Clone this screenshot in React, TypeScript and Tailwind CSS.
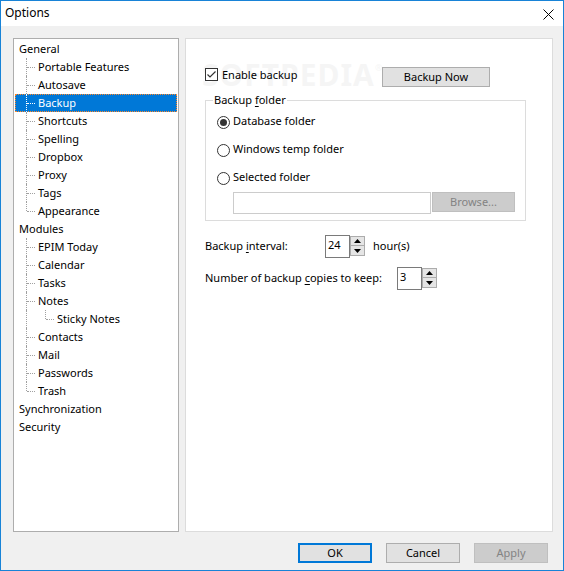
import React from 'react';

type Item = { label: string; level: number; last?: boolean; pipe?: boolean; selected?: boolean };

const TREE: Item[] = [
  { label: 'General', level: 0 },
  { label: 'Portable Features', level: 1 },
  { label: 'Autosave', level: 1 },
  { label: 'Backup', level: 1, selected: true },
  { label: 'Shortcuts', level: 1 },
  { label: 'Spelling', level: 1 },
  { label: 'Dropbox', level: 1 },
  { label: 'Proxy', level: 1 },
  { label: 'Tags', level: 1 },
  { label: 'Appearance', level: 1, last: true },
  { label: 'Modules', level: 0 },
  { label: 'EPIM Today', level: 1 },
  { label: 'Calendar', level: 1 },
  { label: 'Tasks', level: 1 },
  { label: 'Notes', level: 1 },
  { label: 'Sticky Notes', level: 2, last: true, pipe: true },
  { label: 'Contacts', level: 1 },
  { label: 'Mail', level: 1 },
  { label: 'Passwords', level: 1 },
  { label: 'Trash', level: 1, last: true },
  { label: 'Synchronization', level: 0 },
  { label: 'Security', level: 0 },
];

const FONT = { fontFamily: '"Noto Sans", "DejaVu Sans", sans-serif' };

function TreeRow({ item }: { item: Item }) {
  const pad = item.level === 0 ? 'pl-[4px]' : item.level === 1 ? 'pl-[23px]' : 'pl-[42px]';
  const lineColor = item.selected ? 'border-white' : 'border-[#a0a0a0]';
  const lineLeft = item.level === 2 ? 'left-[30px]' : 'left-[11px]';
  const hLeft = item.level === 2 ? 'left-[31px]' : 'left-[12px]';
  return (
    <div
      className={`relative h-[18px] flex items-center pb-[2px] whitespace-nowrap ${pad} ${
        item.selected ? 'bg-[#0078d7] text-white outline outline-1 outline-dotted outline-[#ff8728] -outline-offset-1' : 'text-black'
      }`}
    >
      {item.pipe && (
        <span className="absolute left-[11px] top-0 bottom-0 border-l border-dotted border-[#a0a0a0]" />
      )}
      {item.level > 0 && (
        <>
          <span
            className={`absolute ${lineLeft} top-0 ${item.last ? 'h-[9px]' : 'bottom-0'} border-l border-dotted ${lineColor}`}
          />
          <span className={`absolute ${hLeft} top-[9px] w-[8px] border-t border-dotted ${lineColor}`} />
        </>
      )}
      <span className="leading-none">{item.label}</span>
    </div>
  );
}

function Spinner() {
  return (
    <div className="flex flex-col w-[15px] mt-[1px]">
      <div className="h-[10px] bg-[#e5e5e5] border border-[#acacac] flex items-center justify-center">
        <svg width="7" height="4" viewBox="0 0 7 4">
          <path d="M0 4 L3.5 0 L7 4 Z" fill="#000" />
        </svg>
      </div>
      <div className="h-[10px] bg-[#e5e5e5] border border-t-0 border-[#acacac] flex items-center justify-center">
        <svg width="7" height="4" viewBox="0 0 7 4">
          <path d="M0 0 L3.5 4 L7 0 Z" fill="#000" />
        </svg>
      </div>
    </div>
  );
}

function Radio({ checked, label }: { checked?: boolean; label: string }) {
  return (
    <div className="h-[28px] flex items-center gap-[3px]">
      <span className="w-[13px] h-[13px] rounded-full border border-[#333] bg-white flex items-center justify-center">
        {checked && <span className="w-[7px] h-[7px] rounded-full bg-[#333]" />}
      </span>
      <span className="pb-[1px]">{label}</span>
    </div>
  );
}

export default function App() {
  return (
    <div
      className="w-[564px] h-[571px] border border-[#1883d7] flex flex-col bg-[#f0f0f0] text-[11px] text-black whitespace-nowrap"
      style={FONT}
    >
      {/* Title bar */}
      <div className="h-[25px] bg-white flex items-center justify-between pl-[4px] pr-[9px] text-[12px]">
        <span className="mt-[-1px]">Options</span>
        <svg width="11" height="11" viewBox="0 0 11 11" className="mt-[1px]">
          <path d="M0.5 0.5 L10.5 10.5 M10.5 0.5 L0.5 10.5" stroke="#000" strokeWidth="1" />
        </svg>
      </div>

      <div className="flex-1 flex flex-col pt-[12px] pl-[12px] pr-[10px] pb-[7px]">
        <div className="flex gap-[6px] h-[494px]">
          {/* Tree */}
          <div className="w-[166px] h-full bg-white border border-[#adadad] p-[1px]">
            {TREE.map((it) => (
              <TreeRow key={it.label} item={it} />
            ))}
          </div>

          {/* Backup page */}
          <div className="relative w-[368px] h-full bg-white border border-[#dcdcdc] pl-[19px] pt-[28px]">
            {/* watermark */}
            <div className="absolute left-[16px] top-[24px] h-[24px] pointer-events-none select-none text-[30px] font-bold tracking-[1px] text-[#000] opacity-[0.035] leading-[24px]">
              SOFTPEDIA<span className="text-[9px] align-top leading-none">®</span>
            </div>

            <div className="relative flex items-start h-[20px]">
              <label className="w-[177px] flex items-center gap-[4px] mt-[1px]">
                <span className="w-[13px] h-[13px] border border-[#333] bg-white flex items-center justify-center">
                  <svg width="11" height="11" viewBox="0 0 11 11">
                    <path d="M1.5 5.5 L4 8 L9.5 2.5" stroke="#333" strokeWidth="1.2" fill="none" />
                  </svg>
                </span>
                <span className="leading-[13px]">Enable backup</span>
              </label>
              <button className="w-[108px] h-[20px] bg-[#e1e1e1] border border-[#adadad] flex items-center justify-center leading-none pb-[1px]">
                Backup Now
              </button>
            </div>

            {/* Backup folder group */}
            <div className="relative mt-[13px] w-[321px] border border-[#dcdcdc] pl-[11px] pt-[7px] pb-[6px]">
              <span className="absolute -top-[9px] left-[7px] bg-white px-[1px] leading-[16px]">
                Backup <span className="underline underline-offset-2">f</span>older
              </span>
              <Radio checked label="Database folder" />
              <Radio label="Windows temp folder" />
              <Radio label="Selected folder" />
              <div className="flex items-start gap-[1px] pl-[16px]">
                <div className="w-[198px] h-[22px] border border-[#cccccc] bg-white" />
                <button className="w-[83px] h-[20px] bg-[#cccccc] border border-[#bfbfbf] text-[#838383] flex items-center justify-center leading-none pb-[1px]">
                  Browse...
                </button>
              </div>
            </div>

            {/* Interval */}
            <div className="mt-[14px] flex items-start h-[23px]">
              <span className="w-[120px] self-center">
                Backup <span className="underline underline-offset-2">i</span>nterval:
              </span>
              <div className="w-[25px] h-[23px] border border-[#7a7a7a] pl-[2px] pb-[2px] flex items-center">24</div>
              <Spinner />
              <span className="ml-[8px] self-center">hour(s)</span>
            </div>

            <div className="mt-[9px] flex items-start h-[23px]">
              <span className="w-[192px] self-center">
                Number of backup <span className="underline underline-offset-2">c</span>opies to keep:
              </span>
              <div className="w-[25px] h-[23px] border border-[#7a7a7a] pl-[2px] pb-[2px] flex items-center">3</div>
              <Spinner />
            </div>
          </div>
        </div>

        {/* Bottom buttons */}
        <div className="mt-[11px] flex justify-end gap-[14px] pr-[5px]">
          <button className="w-[74px] h-[20px] bg-[#e1e1e1] border-2 border-[#0078d7] flex items-center justify-center leading-none pb-[1px]">
            OK
          </button>
          <button className="w-[74px] h-[20px] bg-[#e1e1e1] border border-[#adadad] flex items-center justify-center leading-none pb-[1px]">
            Cancel
          </button>
          <button className="w-[74px] h-[20px] bg-[#cccccc] border border-[#bfbfbf] text-[#838383] flex items-center justify-center leading-none pb-[1px]">
            Apply
          </button>
        </div>
      </div>
    </div>
  );
}
